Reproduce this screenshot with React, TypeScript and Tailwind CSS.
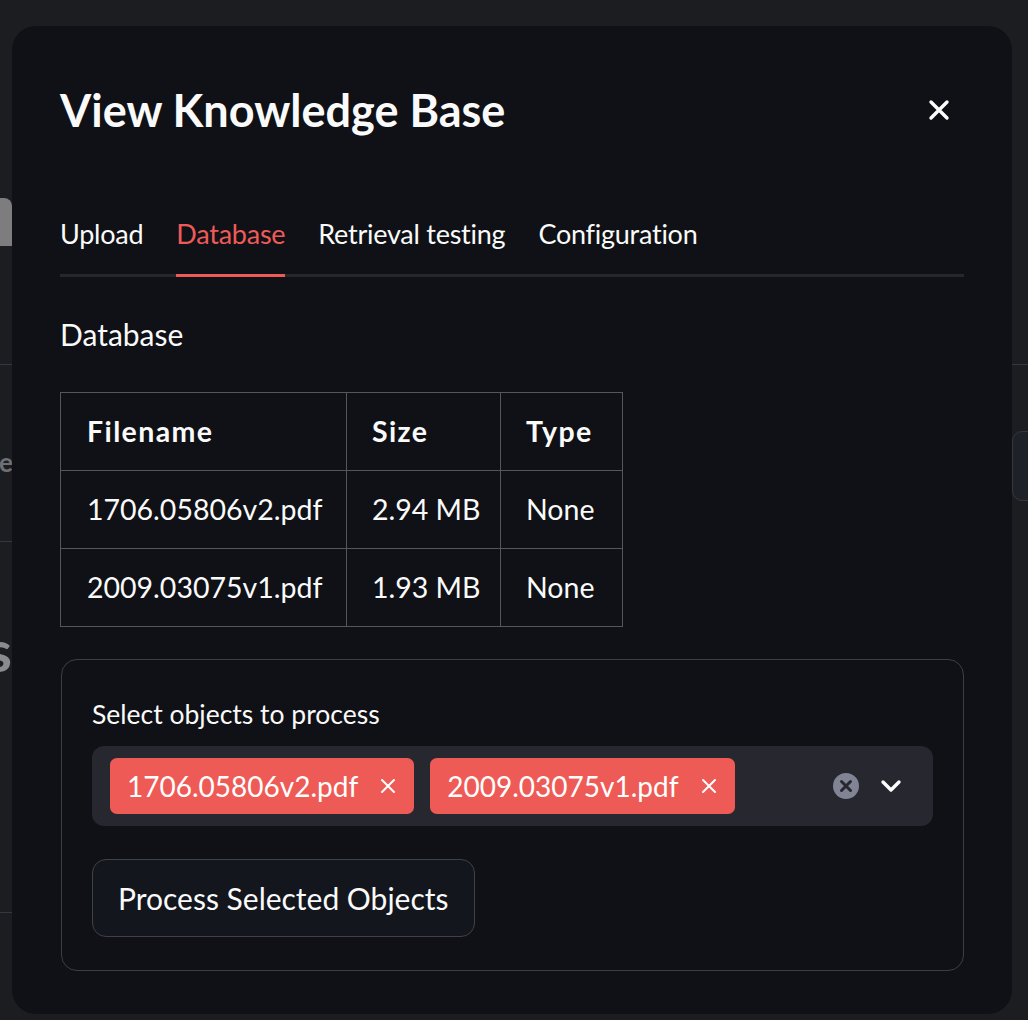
const rows = [
  { name: "1706.05806v2.pdf", size: "2.94 MB", type: "None" },
  { name: "2009.03075v1.pdf", size: "1.93 MB", type: "None" },
];

const tabs = ["Upload", "Database", "Retrieval testing", "Configuration"];

const Chip = ({ label }: { label: string }) => {
  return (
    <div className="flex items-center h-[56px] rounded-[7px] bg-[#ee5b56] pl-[17px] pr-[18px] gap-[22px] text-white text-[28px]">
      <span>{label}</span>
      <svg width="16" height="16" viewBox="0 0 16 16" className="shrink-0">
        <path d="M2 2 L14 14 M14 2 L2 14" stroke="white" strokeWidth="2" strokeLinecap="round" />
      </svg>
    </div>
  );
};

const App = () => {
  return (
    <div
      className="w-[1028px] h-[1020px] overflow-hidden bg-[#1c1d21] flex pt-[26px]"
      style={{ fontFamily: "Lato, 'Noto Sans', sans-serif" }}
    >
      {/* LEFT PAGE STRIP */}
      <div className="w-[12px] shrink-0 flex flex-col overflow-hidden -mt-[26px]">
        <div className="h-[198px]" />
        <div className="h-[48px] bg-[#7d7d7f] rounded-tr-[8px]" />
        <div className="h-[118px]" />
        <div className="h-px bg-[#36373c]" />
        <div className="h-[80px]" />
        <div className="flex justify-end whitespace-nowrap text-[26px] leading-[34px] text-[#6f7075] font-bold tracking-[-1px]">
          <span>Storage</span>
        </div>
        <div className="h-[62px]" />
        <div className="h-px bg-[#36373c]" />
        <div className="h-[78px]" />
        <div className="flex justify-end whitespace-nowrap text-[58px] leading-[60px] text-[#8a8b8f] font-bold">
          <span>Files</span>
        </div>
        <div className="h-[232px]" />
        <div className="h-px bg-[#36373c]" />
      </div>

      {/* DIALOG */}
      <div className="w-[1000px] h-[988px] shrink-0 bg-[#0f1116] rounded-[24px] px-[48px] pt-[58px] text-[#fafafa]">
        {/* HEADER */}
        <div className="flex items-center justify-between">
          <h2 className="text-[45px] leading-[52px] font-bold">View Knowledge Base</h2>
          <svg width="22" height="22" viewBox="0 0 22 22" className="mr-[14px]">
            <path d="M3 3 L19 19 M19 3 L3 19" stroke="white" strokeWidth="3.4" strokeLinecap="round" />
          </svg>
        </div>

        {/* TABS */}
        <div className="mt-[80px] flex gap-[33px] border-b-[3px] border-[#26272d]">
          {tabs.map((t) => (
            <div
              key={t}
              className={
                t === "Database"
                  ? "text-[27px] tracking-[-0.25px] leading-[36px] pb-[22px] -mb-[3px] border-b-[3px] border-[#ee5b56] text-[#ee5b56]"
                  : "text-[27px] tracking-[-0.25px] leading-[36px] pb-[22px] -mb-[3px] border-b-[3px] border-transparent"
              }
            >
              {t}
            </div>
          ))}
        </div>

        {/* DATABASE */}
        <div className="mt-[37px] text-[30px] leading-[40px]">Database</div>

        <table className="mt-[38px] border-collapse text-[28.5px]">
          <thead>
            <tr className="h-[78px]">
              <th className="w-[286px] border border-[#55565b] text-left pl-[26px] font-bold tracking-[1.4px]">Filename</th>
              <th className="w-[154px] border border-[#55565b] text-left pl-[25px] font-bold tracking-[1.4px]">Size</th>
              <th className="w-[122px] border border-[#55565b] text-left pl-[25px] font-bold tracking-[1.4px]">Type</th>
            </tr>
          </thead>
          <tbody>
            {rows.map((r) => (
              <tr key={r.name} className="h-[78px]">
                <td className="border border-[#55565b] pl-[26px]">{r.name}</td>
                <td className="border border-[#55565b] pl-[25px]">{r.size}</td>
                <td className="border border-[#55565b] pl-[25px]">{r.type}</td>
              </tr>
            ))}
          </tbody>
        </table>

        {/* FORM */}
        <div className="mt-[32px] ml-px w-[903px] h-[312px] border border-[#3c3e44] rounded-[16px] pl-[30px] pr-[30px] pt-[37px]">
          <div className="text-[26.5px] leading-[34px]">Select objects to process</div>
          <div className="mt-[15px] h-[80px] bg-[#26272f] rounded-[12px] flex items-center pl-[18px] pr-[31px]">
            <div className="flex gap-[16px] flex-1">
              <Chip label="1706.05806v2.pdf" />
              <Chip label="2009.03075v1.pdf" />
            </div>
            <svg width="28" height="28" viewBox="0 0 28 28">
              <circle cx="14" cy="14" r="13" fill="#808494" />
              <path d="M9.5 9.5 L18.5 18.5 M18.5 9.5 L9.5 18.5" stroke="#26272f" strokeWidth="3" strokeLinecap="round" />
            </svg>
            <svg width="22" height="14" viewBox="0 0 22 14" className="ml-[20px]">
              <path d="M3 3 L11 11 L19 3" stroke="white" strokeWidth="3.4" strokeLinecap="round" strokeLinejoin="round" fill="none" />
            </svg>
          </div>
          <button className="mt-[33px] h-[78px] px-[25px] rounded-[14px] border border-[#3f4147] bg-[#13161d] text-[30px] text-[#fafafa]">
            Process Selected Objects
          </button>
        </div>
      </div>

      {/* RIGHT PAGE STRIP */}
      <div className="w-[16px] shrink-0 flex flex-col overflow-hidden -mt-[26px]">
        <div className="h-[364px]" />
        <div className="h-px bg-[#36373c]" />
        <div className="h-[66px]" />
        <div className="h-[70px] w-[40px] border border-[#36373c] rounded-l-[10px] bg-[#1f2128]" />
      </div>
    </div>
  );
};

export default App;
